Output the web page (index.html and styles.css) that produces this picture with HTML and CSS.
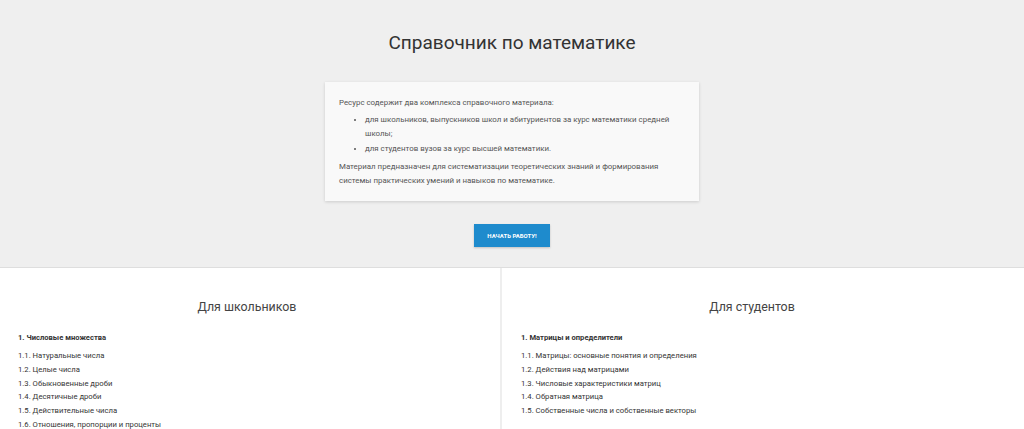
FILE: index.html
```html
<!DOCTYPE html>
<html>
  <head>
    <meta charset="UTF-8">
    <title>Справочник по математике</title>
    <link rel="stylesheet" href="styles.css">
  </head>
  <body>
    <div class="intro">
      <h1 class="title">Справочник по математике</h1>
      <div class="about">
        <p>Ресурс содержит два комплекса справочного материала:</p>
        <ul>
          <li>для школьников, выпускников школ и абитуриентов за курс математики средней школы;</li>
          <li>для студентов вузов за курс высшей математики.</li>
        </ul>
        <p>Материал предназначен для систематизации теоретических знаний и формирования системы практических умений и навыков по математике.</p>
      </div>
      <a class="start" href="#">Начать работу!</a>
    </div>
    <div class="columns">
      <div class="col col-left">
        <h2>Для школьников</h2>
        <div class="section">1. Числовые множества</div>
        <ul class="topics">
          <li>1.1. Натуральные числа</li>
          <li>1.2. Целые числа</li>
          <li>1.3. Обыкновенные дроби</li>
          <li>1.4. Десятичные дроби</li>
          <li>1.5. Действительные числа</li>
          <li>1.6. Отношения, пропорции и проценты</li>
        </ul>
      </div>
      <div class="col col-right">
        <h2>Для студентов</h2>
        <div class="section">1. Матрицы и определители</div>
        <ul class="topics">
          <li>1.1. Матрицы: основные понятия и определения</li>
          <li>1.2. Действия над матрицами</li>
          <li>1.3. Числовые характеристики матриц</li>
          <li>1.4. Обратная матрица</li>
          <li>1.5. Собственные числа и собственные векторы</li>
        </ul>
      </div>
    </div>
  </body>
</html>
```

FILE: styles.css
```css
html {
  font-family: Roboto, "Liberation Sans", sans-serif;
  background: white;
}
body {
  margin: 0;
  height: 429px;
  overflow: hidden;
}
.intro {
  background: #efefef;
  border-bottom: 1px solid #dedede;
  height: 268px;
  box-sizing: border-box;
  display: flex;
  flex-direction: column;
  align-items: center;
  padding-top: 30px;
}
.title {
  margin: 0;
  font-size: 19px;
  font-weight: 400;
  color: #333;
  line-height: 26px;
}
.about {
  margin-top: 26px;
  width: 374px;
  box-sizing: border-box;
  background: #f9f9f9;
  box-shadow: 0 1px 3px rgba(0,0,0,0.15);
  padding: 14px 14px 13px;
  font-size: 7.9px;
  line-height: 14.2px;
  color: #555;
}
.about p {
  margin: 0;
}
.about ul {
  margin: 3px 0 4px;
  padding-left: 26px;
}
.start {
  margin-top: 23px;
  width: 76px;
  height: 23px;
  display: flex;
  align-items: center;
  justify-content: center;
  background: #1e8bcd;
  box-shadow: 0 1px 2px rgba(0,0,0,0.2);
  color: white;
  text-decoration: none;
  text-transform: uppercase;
  font-size: 6px;
  font-weight: 700;
}
.columns {
  display: flex;
}
.col {
  padding-top: 29px;
  box-sizing: border-box;
  color: #333;
}
.col-left {
  width: 502px;
  padding-left: 18px;
  padding-right: 24px;
  border-right: 2px solid #eeeeee;
}
.col-right {
  flex: 1;
  padding-left: 19px;
  padding-right: 41px;
}
h2 {
  margin: 0 0 15px;
  font-size: 12.4px;
  font-weight: 400;
  text-align: center;
  color: #444;
  line-height: 20px;
}
.section {
  font-size: 7.6px;
  font-weight: 700;
  line-height: 12px;
  margin-bottom: 5px;
}
.topics {
  list-style: none;
  margin: 0;
  padding: 0;
  font-size: 7.7px;
  line-height: 13.8px;
}
```
